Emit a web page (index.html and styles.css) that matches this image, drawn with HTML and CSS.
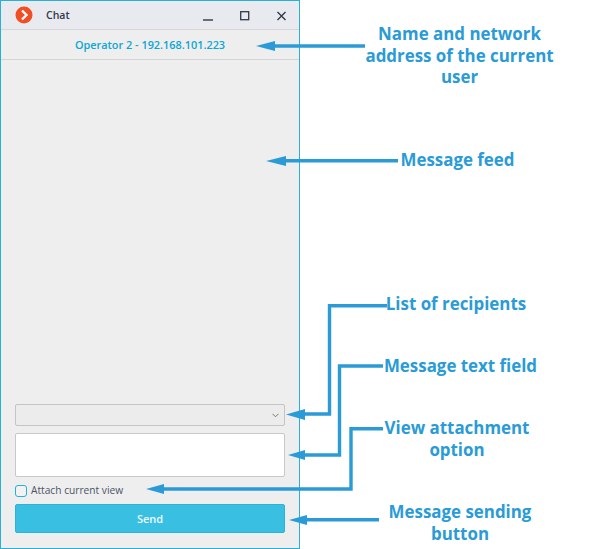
FILE: index.html
```html
<!DOCTYPE html>
<html lang="en">
<head>
<meta charset="utf-8">
<title>Chat</title>
<link rel="stylesheet" href="styles.css">
</head>
<body>
<div class="window">
  <div class="titlebar">
    <svg class="logo" width="18" height="18" viewBox="0 0 18 18"><circle cx="9" cy="9" r="8.5" fill="#f04e23"/><path d="M7 4.5 11.5 9 7 13.5" fill="none" stroke="#fff" stroke-width="2.4"/></svg>
    <span class="title">Chat</span>
    <div class="controls">
      <svg width="10" height="10" viewBox="0 0 10 10"><path d="M0 9H10" stroke="#2f3a4a" stroke-width="1.4"/></svg>
      <svg width="10" height="10" viewBox="0 0 10 10"><rect x="0.7" y="0.7" width="8" height="8" fill="none" stroke="#2f3a4a" stroke-width="1.3"/></svg>
      <svg width="10" height="10" viewBox="0 0 10 10"><path d="M0.5 1 8.5 9M8.5 1 0.5 9" stroke="#2f3a4a" stroke-width="1.4"/></svg>
    </div>
  </div>
  <div class="userbar">Operator 2 - 192.168.101.223</div>
  <div class="feed"></div>
  <div class="form">
    <div class="combo">
      <svg width="7" height="5" viewBox="0 0 7 5"><path d="M0.5 0.8 3.5 3.8 6.5 0.8" fill="none" stroke="#777" stroke-width="1"/></svg>
    </div>
    <div class="textfield"></div>
    <label class="attach"><span class="checkbox"></span><span class="attach-label">Attach current view</span></label>
    <div class="send">Send</div>
  </div>
</div>

<svg class="arrows" width="600" height="549" viewBox="0 0 600 549">
  <g fill="none" stroke="#2a9bd6" stroke-width="3.4">
    <path d="M365 46H272"/>
    <path d="M398 160.7H282"/>
    <path d="M387 305.7H329.5V414H303"/>
    <path d="M383 366H339.5V455H303"/>
    <path d="M383 428.7H351V489H161"/>
    <path d="M379 519.7H305"/>
  </g>
  <g fill="#2a9bd6">
    <path d="M256 46 275 41V51Z"/>
    <path d="M266 161 286 156V166Z"/>
    <path d="M286 414.5 305 409V420Z"/>
    <path d="M288 455 305 450V460Z"/>
    <path d="M146 489 164 484V494Z"/>
    <path d="M289 520 307 515V525Z"/>
  </g>
</svg>

<div class="note note-user">Name and network<br>address of the current<br>user</div>
<div class="note note-feed">Message feed</div>
<div class="note note-list">List of recipients</div>
<div class="note note-text">Message text field</div>
<div class="note note-view">View attachment<br>option</div>
<div class="note note-send">Message sending<br>button</div>
</body>
</html>
```
FILE: styles.css
```css
* { box-sizing: border-box; }
html, body { margin: 0; padding: 0; background: #fff; }
body {
  position: relative;
  width: 600px;
  height: 549px;
  overflow: hidden;
  font-family: "Open Sans", "Noto Sans", sans-serif;
}
.window {
  width: 300px;
  height: 549px;
  border: 1px solid #29b0d8;
  background: #eeeeee;
  display: flex;
  flex-direction: column;
}
.titlebar {
  height: 29px;
  flex: none;
  background: #e8eaef;
  border-bottom: 1px solid #d6d6d8;
  display: flex;
  align-items: center;
  padding-left: 14px;
}
.logo { flex: none; }
.title {
  margin-left: 13px;
  font-size: 10.5px;
  font-weight: 600;
  color: #2f3a4a;
}
.controls {
  margin-left: auto;
  display: flex;
  gap: 27px;
  padding-right: 12px;
  margin-top: 1px;
}
.controls svg { display: block; }
.userbar {
  height: 30px;
  flex: none;
  border-bottom: 1px solid #d4d4d4;
  display: flex;
  align-items: center;
  justify-content: center;
  font-size: 10.9px;
  font-weight: 600;
  color: #0ba6d3;
}
.feed { flex: 1; }
.form {
  flex: none;
  padding: 0 14px 15px;
  display: flex;
  flex-direction: column;
}
.combo {
  height: 22px;
  border: 1px solid #c4c4c4;
  border-radius: 2px;
  background: #ececec;
  display: flex;
  align-items: center;
  justify-content: flex-end;
  padding-right: 5px;
}
.textfield {
  height: 44px;
  margin-top: 7px;
  border: 1px solid #c8c8c8;
  border-radius: 2px;
  background: #fff;
}
.attach {
  height: 13px;
  margin-top: 7px;
  display: flex;
  align-items: center;
  gap: 4px;
  font-size: 10.2px;
  color: #4a5564;
}
.attach-label { margin-top: -2px; }
.checkbox {
  width: 12px;
  height: 12px;
  border: 1px solid #1fb2da;
  border-radius: 3px;
  background: #f2f2f2;
  flex: none;
}
.send {
  height: 29px;
  margin-top: 7px;
  border: 1px solid #2cb3d9;
  border-radius: 2px;
  background: #39bfe2;
  color: #eefafd;
  font-size: 11px;
  font-weight: 600;
  display: flex;
  align-items: center;
  justify-content: center;
}
.arrows { position: absolute; left: 0; top: 0; }
.note {
  position: absolute;
  color: #2a9bd6;
  font-size: 16.9px;
  font-weight: 700;
  line-height: 21.5px;
  text-align: center;
  white-space: nowrap;
  transform: translateX(-50%);
}
.note-user { left: 459.5px; top: 23px; }
.note-feed { left: 457.5px; top: 149px; }
.note-list { left: 456px; top: 293px; }
.note-text { left: 460.5px; top: 355px; }
.note-view { left: 457px; top: 417px; }
.note-send { left: 460px; top: 501px; }
```
